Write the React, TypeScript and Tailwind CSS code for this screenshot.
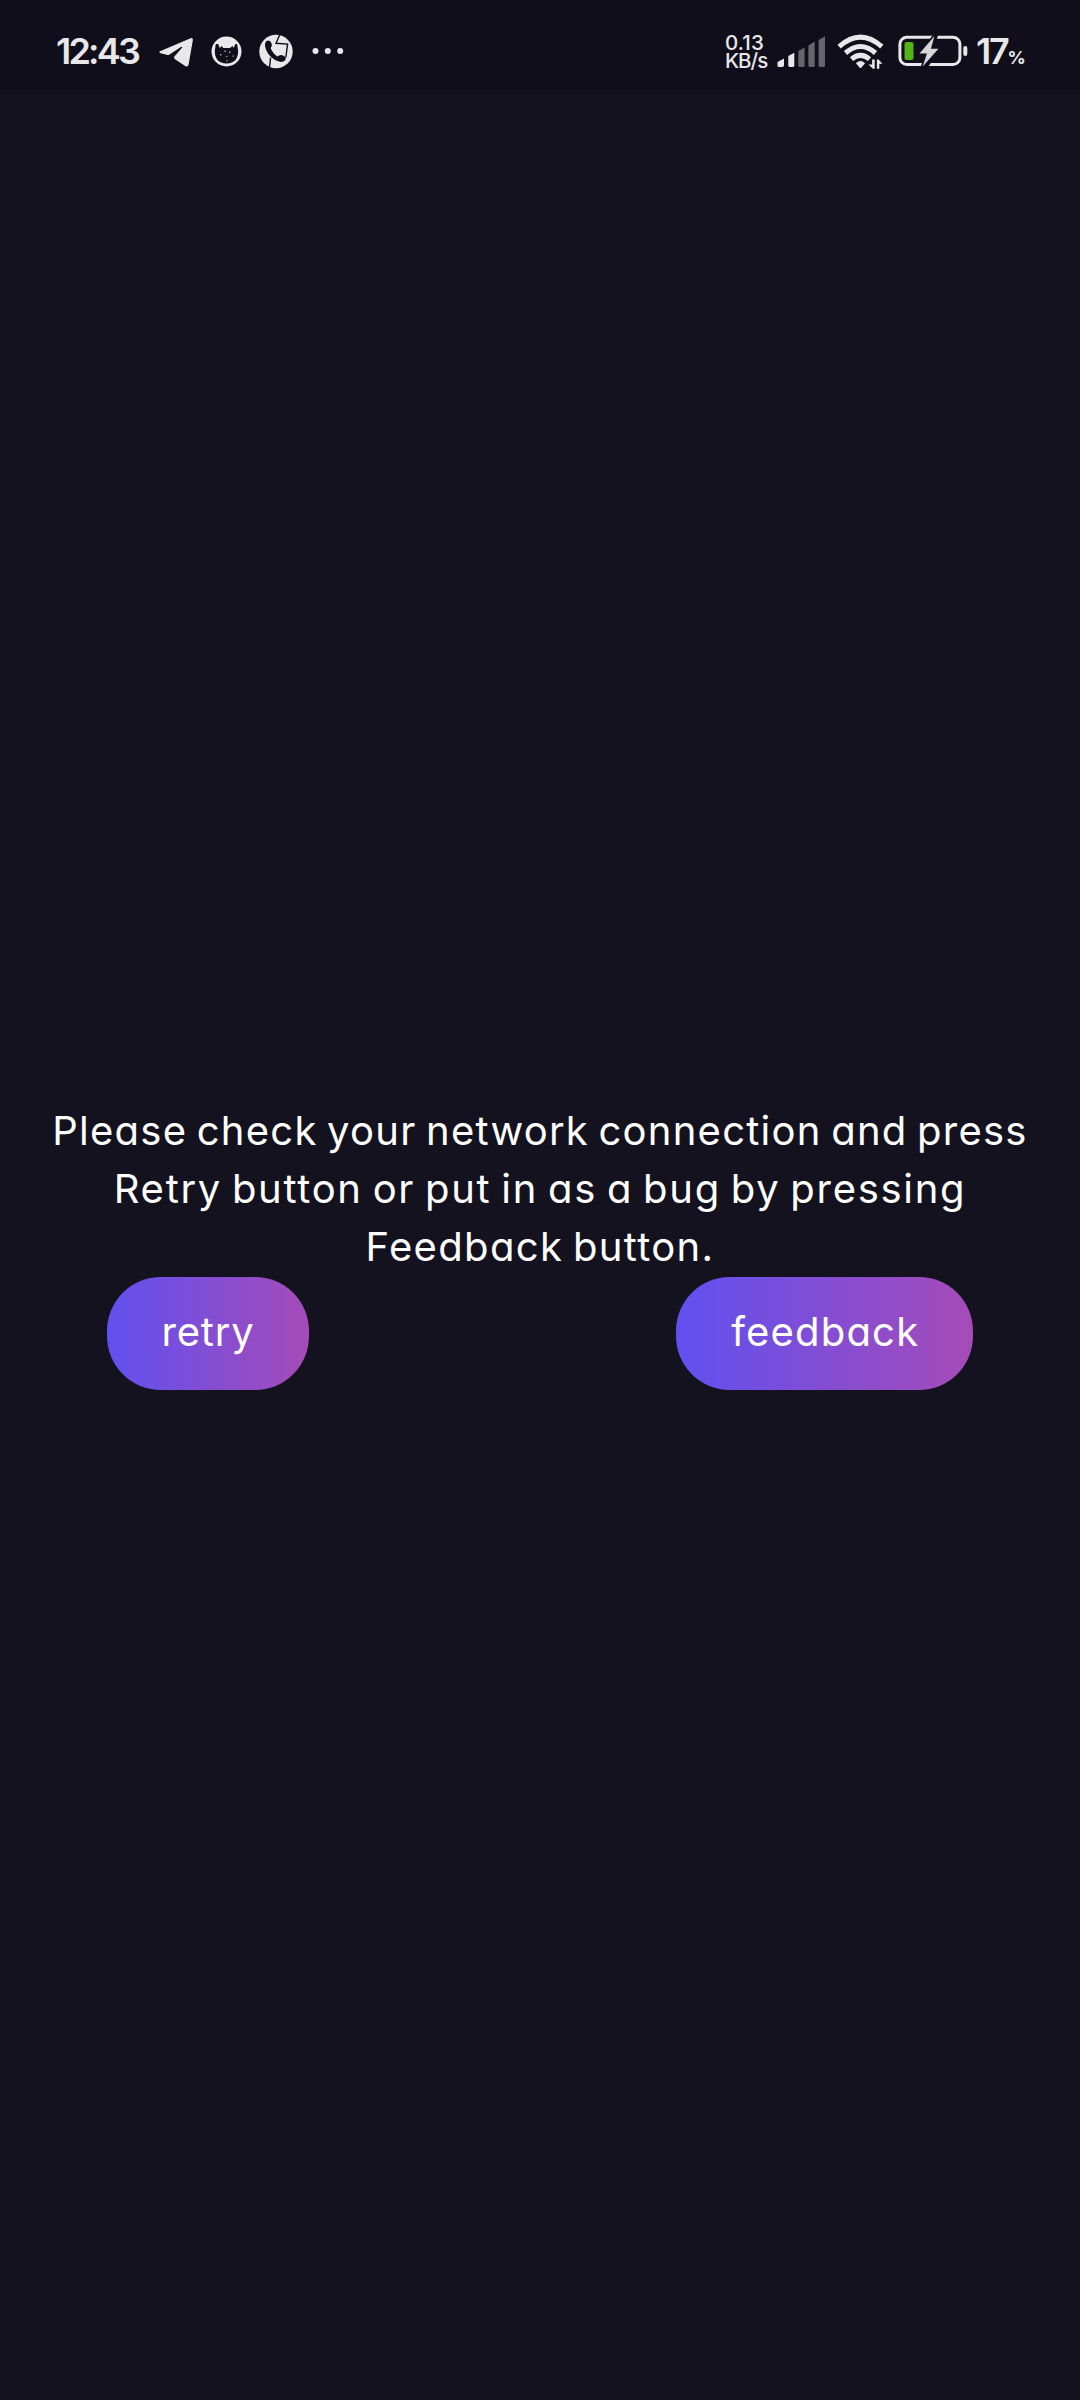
import React from "react";

const FONT = "font-['Inter','Liberation_Sans',sans-serif]";

function Telegram() {
  return (
    <svg className="ml-[20px] h-[31px] w-[35px] shrink-0" viewBox="159 36 35 31" fill="#e8e8ea">
      <path d="M160 51.2 L190.6 38.2 Q193.3 37.4 192.8 40.5 L188.6 64.6 Q187.8 67.6 185.2 66.1 L175 59.3 Q173.2 57.8 174.6 56.2 L182 47.8 Q182.9 46.2 181 47 L169.5 54.4 Q168 55.2 166.5 54.8 L160.6 53.2 Q158.2 52.2 160 51.2Z" />
    </svg>
  );
}

function CatBadge() {
  return (
    <svg className="ml-[17px] h-[31px] w-[31px] shrink-0" viewBox="210.5 35.5 31 31">
      <circle cx="226" cy="51" r="15" fill="#e8e8ea" />
      <path d="M214.3 50 L215.3 43.6 H217.6 L219.2 47.6 L221 45.4 L223 47.4 H229.5 L232 45.6 L233 47.6 L235 43.4 H236.6 L237.6 50 Q237.8 62.8 226 63 Q214.2 62.8 214.3 50Z" fill="#100e1a" />
      <g fill="#b9b9be">
        <rect x="219.5" y="53.5" width="1.4" height="1.4" />
        <rect x="224" y="50" width="1.4" height="1.4" />
        <rect x="228.5" y="51" width="1.4" height="1.4" />
        <rect x="225.6" y="55.4" width="1.2" height="1.2" />
        <rect x="232" y="55" width="1.2" height="1.2" />
        <rect x="226" y="59.6" width="1.2" height="1.2" />
      </g>
    </svg>
  );
}

function CallBadge() {
  return (
    <svg className="ml-[17px] h-[35px] w-[34px] shrink-0" viewBox="259 33.5 34 35">
      <circle cx="276" cy="51" r="16.7" fill="#e8e8ea" />
      <path d="M266 41 Q269.5 38.5 271.6 43 Q272.6 45.6 270.6 47.4 Q272.5 52.5 277.4 56 Q279.8 53.8 282.4 54.8 Q287.3 56.8 285 60 Q281.5 63 275 59.6 Q266.3 54 265 45.6 Q264.7 42.4 266 41Z" fill="#100e1a" />
      <path d="M279.8 34 L276 42.8 L287.6 43.6 L285.8 57 M270.6 57 L269.4 68" stroke="#100e1a" strokeWidth="1.4" fill="none" />
    </svg>
  );
}

function Dots() {
  return (
    <svg className="ml-[19px] h-[8px] w-[32px] shrink-0" viewBox="311.5 47 32 8" fill="#e8e8ea">
      <circle cx="315" cy="51" r="3" />
      <circle cx="327.3" cy="51" r="3" />
      <circle cx="339.7" cy="51" r="3" />
    </svg>
  );
}

function Signal() {
  return (
    <svg className="h-[32px] w-[49px] shrink-0" viewBox="777 35 49 32">
      <path d="M777.5 62 L784 58.6 V65 Q784 67 782.4 67 H779 Q777.5 67 777.5 65.4Z" fill="#e8e8ea" />
      <path d="M788.3 56 L794.3 52.8 V65.6 Q794.3 67 793 67 H789.7 Q788.3 67 788.3 65.6Z" fill="#e8e8ea" />
      <g fill="#66656d">
        <path d="M798.3 51 L804.6 47.6 V65.6 Q804.6 67 803.3 67 H799.6 Q798.3 67 798.3 65.6Z" />
        <path d="M808.4 45.4 L814.7 41.6 V65.6 Q814.7 67 813.4 67 H809.7 Q808.4 67 808.4 65.6Z" />
        <path d="M818.6 40 L825 36.2 V65.6 Q825 67 823.7 67 H820 Q818.6 67 818.6 65.6Z" />
      </g>
    </svg>
  );
}

function Wifi() {
  return (
    <svg className="ml-[11px] h-[36px] w-[47px] shrink-0" viewBox="837.5 33 47 36">
      <g fill="none" stroke="#e8e8ea" strokeWidth="5">
        <path d="M839.6 46.6 Q861 27.6 882.3 46.6" />
        <path d="M846 53 Q861 40 876 53" />
        <path d="M852 59.2 Q861 51.6 870 59.2" />
      </g>
      <path d="M856.4 63.2 Q861 58.6 865.6 63.2 L862 67.4 Q861 68.4 860 67.4Z" fill="#e8e8ea" />
      <path d="M872.6 59.4 H875.2 V68.8 H873.4 L869 64.4 H872.6Z M877.4 68.8 V59.4 H879 L883 63.8 H879.8 V68.8Z" fill="#e8e8ea" />
    </svg>
  );
}

function Battery() {
  return (
    <svg className="ml-[14px] h-[32px] w-[70px] shrink-0" viewBox="898.5 35 70 32">
      <rect x="900.4" y="37.2" width="60" height="27.4" rx="7" fill="none" stroke="#e8e8ea" strokeWidth="3" />
      <path d="M933.5 35 L918 54 H925 L921 68 H928 L941 48 H934.5 L938.6 35Z" fill="#100e1a" />
      <rect x="905" y="42" width="9" height="18" rx="2" fill="#52b415" />
      <rect x="963.8" y="46" width="4" height="10" rx="2" fill="#e8e8ea" />
      <path d="M935 36 L920 53.4 H927.4 L923.2 66.6 L939 48.8 H931.4Z" fill="#d6d6d9" />
    </svg>
  );
}

function PillButton({ label, className }: { label: string; className: string }) {
  return (
    <button
      className={`flex h-[113px] items-center justify-center rounded-[54px] bg-linear-to-r/srgb from-[#6050f0] to-[#a64bb8] text-[40px] leading-[58px] whitespace-nowrap text-white ${className}`}
    >
      {label}
    </button>
  );
}

export default function App() {
  return (
    <div className={`flex h-[2400px] w-[1080px] flex-col bg-[#15121f] ${FONT}`}>
      <header className="flex h-[94px] shrink-0 items-center bg-[#100e1a] pt-[8px] pr-[54px] pl-[56px] text-[#e8e8ea]">
        <div className="flex h-[36px] w-[83px] items-center text-[36px] font-semibold tracking-[-2.8px] whitespace-nowrap">12:43</div>
        <Telegram />
        <CatBadge />
        <CallBadge />
        <Dots />
        <div className="ml-auto flex w-[52px] flex-col pt-[2px] text-[20.5px] leading-[18px] font-medium whitespace-nowrap">
          <span className="tracking-[0.1px]">0.13</span>
          <span className="tracking-[-1px]">KB/s</span>
        </div>
        <Signal />
        <Wifi />
        <Battery />
        <div className="ml-[8px] flex w-[50px] items-baseline whitespace-nowrap">
          <span className="text-[36px] font-semibold tracking-[-2.2px]">17</span>
          <span className="text-[18px] font-bold">%</span>
        </div>
      </header>
      <main className="flex flex-col pt-[1008px] text-white">
        <p className="flex flex-col items-center text-[40px] leading-[58px] whitespace-nowrap [font-feature-settings:'cv11'] [word-spacing:-3px]">
          <span className="tracking-[1.25px]">Please check your network connection and press</span>
          <span className="tracking-[1.7px]">Retry button or put in as a bug by pressing</span>
          <span className="tracking-[1.35px]">Feedback button.</span>
        </p>
        <div className="flex justify-between pt-px pr-[107px] pl-[107px] [font-feature-settings:'cv11']">
          <PillButton label="retry" className="w-[202px] pb-[3px] tracking-[0.8px]" />
          <PillButton label="feedback" className="w-[297.5px] pb-[3px] pl-[2px] tracking-[1.2px]" />
        </div>
      </main>
    </div>
  );
}
